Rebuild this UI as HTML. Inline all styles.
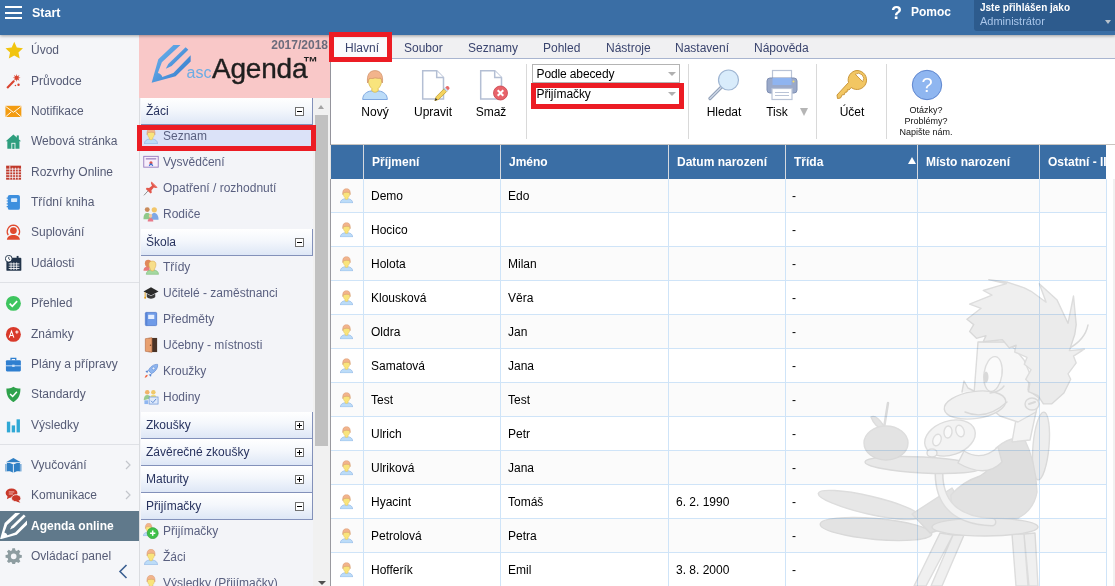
<!DOCTYPE html><html lang="cs"><head><meta charset="utf-8"><title>Agenda online</title><style>
*{box-sizing:border-box;margin:0;padding:0}
html,body{width:1115px;height:586px;overflow:hidden;background:#fff}
body{font-family:"Liberation Sans",Arial,sans-serif;font-size:12px;color:#000;position:relative}
.abs{position:absolute}
#hdr{left:0;top:0;width:1115px;height:35px;background:#3a6ea5;box-shadow:0 1px 3px rgba(0,0,0,.35);z-index:5}
#hdr .start{left:32px;top:5px;font-weight:bold;font-size:12.5px;color:#fff;line-height:16px}
#hdr .bar{left:5px;width:17px;height:2px;background:#fff}
#user{left:974px;top:0;width:141px;height:31px;background:#2d5b8d;border-radius:0 0 0 3px}
#user .l1{left:6px;top:.700px;font-weight:bold;font-size:10px;color:#fff;line-height:13px;white-space:nowrap}
#user .l2{left:6px;top:14px;font-size:11px;color:#a9c6ea;line-height:14px}
#nav{left:0;top:34px;width:139px;height:552px;background:#f5f6f9}
.ni{left:0;width:139px;height:30px;color:#555b75;font-size:12px;line-height:30px;white-space:nowrap}
.ni span{position:absolute;left:31px;top:0}
.ni svg{position:absolute;left:4.800px;top:6.500px;width:16.800px;height:16.800px}
.ni.sel{background:#60798b;color:#fff;font-weight:bold}
.nsep{left:0;width:139px;height:1px;background:#dfe1e6}
#side{left:139px;top:34px;width:192px;height:552px;background:#f3f4f8;border-left:1px solid #dadce0}
#pink{left:139px;top:34px;width:191px;height:64px;background:#f9c8c8}
.sh{left:141px;width:172px;height:27px;background:linear-gradient(#ffffff 0%,#f4f7fc 45%,#dee7f6 100%);border-right:1px solid #8391ba;border-bottom:1px solid #8391ba;color:#27325e;font-size:12px;line-height:27px;padding-left:5px;white-space:nowrap}
.sh i{position:absolute;right:8px;top:9px;width:9px;height:9px;border:1px solid #707070;background:#fff}
.sh i:before{content:"";position:absolute;left:1px;top:3px;width:5px;height:1px;background:#000}
.sh i.p:after{content:"";position:absolute;left:3px;top:1px;width:1px;height:5px;background:#000}
.si{left:141px;width:172px;height:26px;color:#5a6080;font-size:12px;line-height:22px;white-space:nowrap}
.si span{position:absolute;left:22px;top:0}
.si svg{position:absolute;left:2px;top:3px;width:16px;height:16px}
.red{border:5px solid #ec1c24;z-index:9}
#tabs{left:331px;top:34px;width:784px;height:25px;background:#f0f0f2;border-bottom:1px solid #a9b5d0}
.tab{top:0;height:24px;line-height:28px;font-size:12px;color:#3a446e;white-space:nowrap}
#rib{left:331px;top:59px;width:784px;height:86px;background:#fff;border-bottom:1px solid #c9c5c0}
.rl{font-size:12px;line-height:14px;color:#000;text-align:center;white-space:nowrap;transform:translateX(-50%)}
.vsep{top:64px;width:1px;height:75px;background:#d9d9d9}
.sel{ }
.cb{left:532px;width:148px;height:19px;border:1px solid #b4b4b4;background:#fff;font-size:12px;line-height:19px;padding-left:3.500px;white-space:nowrap;letter-spacing:-.12px}
.cb:after{content:"";position:absolute;right:3px;top:7px;border:4px solid transparent;border-top:4px solid #b0b0b0;border-bottom:0}
#th{left:331px;top:145px;width:775px;height:34px;background:#3a6ea5}
.thc{top:0;height:34px;line-height:34px;color:#fff;font-weight:bold;font-size:12px;white-space:nowrap;overflow:hidden}
.csep{top:0;width:1px;height:34px;background:#d5d9df}
.row{left:331px;width:775px;height:34px;border-bottom:1px solid #cfe4f8}
.row.g{background:#fbfbfb}
.td{top:0;height:34px;line-height:35px;font-size:12px;white-space:nowrap}
.vl{top:179px;width:1px;height:407px;background:#cfe4f8}
</style></head><body>

<svg width="0" height="0" style="position:absolute">
<defs>
<symbol id="per" viewBox="0 0 26 30">
<path d="M.7 29.500C.7 24 5 21.500 9 21L17 21C21 21.500 25.300 24 25.300 29.500Z" fill="#bcdcf8" stroke="#7fa8e0" stroke-width="1"/>
<path d="M6.200 9C6.200 14 8 17 9.800 18.500L9.800 20.500C11 22.800 15 22.800 16.200 20.500L16.200 18.500C18 17 19.800 14 19.800 9 19.800 7 6.200 7 6.200 9Z" fill="#f9e47c" stroke="#d9b84a" stroke-width=".8"/>
<path d="M5.600 13C4.500 5 7.500.6 13 .6 18.500.6 21.500 5 20.400 13 20 11 19.600 9.500 18.600 8 16 9 14 7.500 12.500 8 10 9 8.500 8.200 7.600 8.400 6.500 9.500 6.200 11 5.600 13Z" fill="#f2b48c" stroke="#cf9068" stroke-width=".7"/>
</symbol>
</defs></svg>

<div id="hdr" class="abs"><div class="abs bar" style="top:6px"></div><div class="abs bar" style="top:12px"></div><div class="abs bar" style="top:17px"></div><div class="abs start">Start</div>
<div class="abs" style="left:891px;top:2px;font-size:18px;font-weight:bold;color:#fff;line-height:22px">?</div><div class="abs" style="left:911px;top:4px;font-size:12px;font-weight:bold;color:#fff;line-height:16px">Pomoc</div>
<div id="user" class="abs"><div class="abs l1">Jste přihlášen jako</div><div class="abs l2">Administrátor</div><div class="abs" style="left:131px;top:20px;border:3.500px solid transparent;border-top:4px solid #b8c2cc;border-bottom:0"></div></div></div>
<div id="nav" class="abs"></div>
<div class="abs ni" style="top:35px"><svg viewBox="0 0 18 18" style="left:4.500px;top:6px;width:18.500px;height:18.500px"><path d="M9 .8l2.500 5.500 6 .7-4.400 4.100 1.200 5.900L9 14l-5.300 3 1.200-5.900L.5 7l6-.7z" fill="#f1c40f"/></svg><span>Úvod</span></div>
<div class="abs ni" style="top:66px"><svg viewBox="0 0 18 18"><path d="M1.500 15.200l7.500-7.600 1.600 1.600L3.100 16.800z" fill="#d9432f"/><path d="M12.500 1l.7 2.400 2.300-1.200-1.200 2.300 2.400.7-2.400.7 1.200 2.300-2.300-1.200-.7 2.400-.7-2.400-2.300 1.200 1.200-2.300L8.300 5.200l2.400-.7-1.200-2.300 2.300 1.200z" fill="#d9432f"/><circle cx="14.500" cy="12.500" r="1.300" fill="#d9432f"/><circle cx="11.200" cy="13.500" r=".8" fill="#d9432f"/></svg><span>Průvodce</span></div>
<div class="abs ni" style="top:96px"><svg viewBox="0 0 18 18"><rect x=".5" y="3" width="17" height="12" fill="#f39c12"/><path d="M.5 3.500l8.500 6.500 8.500-6.500M.5 15l6.200-5.500M17.500 15l-6.200-5.500" stroke="#fff" stroke-width="1" fill="none"/></svg><span>Notifikace</span></div>
<div class="abs ni" style="top:126px"><svg viewBox="0 0 18 18"><path d="M9 1.500L.8 8.800h1.700V17h13V8.800h1.700z" fill="#2e9e7e"/><rect x="12.600" y="2.600" width="2.200" height="4" fill="#2e9e7e"/><rect x="7.300" y="11" width="3.400" height="6.500" fill="#2e9e7e" stroke="#fff" stroke-width=".9"/></svg><span>Webová stránka</span></div>
<div class="abs ni" style="top:157px"><svg viewBox="0 0 18 18"><rect x="1.200" y="1.800" width="16" height="15" fill="#c0392b"/><path d="M1.200 5.500h16M1.200 8.500h16M1.200 11.500h16M1.200 14.300h16M5.200 1.800v15M8.200 4v12.800M11.200 4v12.800M14.200 4v12.800" stroke="#f5f6f9" stroke-width=".9"/></svg><span>Rozvrhy Online</span></div>
<div class="abs ni" style="top:187px"><svg viewBox="0 0 18 18"><rect x="3" y="1" width="13" height="16" rx="2" fill="#3d8fde"/><rect x="6.500" y="4.500" width="6.500" height="4" rx=".5" fill="#d7e9fb"/><path d="M1.800 4.500h2.400M1.800 7.500h2.400M1.800 10.500h2.400M1.800 13.500h2.400" stroke="#3d8fde" stroke-width="1.300"/></svg><span>Třídní kniha</span></div>
<div class="abs ni" style="top:217px"><svg viewBox="0 0 18 18"><path d="M3.500 12A7 7 0 0 1 9 1.200 7 7 0 0 1 14.500 12" stroke="#e04a2f" stroke-width="1.300" fill="none"/><circle cx="9" cy="7" r="3.600" fill="#e04a2f"/><path d="M2 17c.3-3.500 3-5.200 7-5.200s6.700 1.700 7 5.200z" fill="#e04a2f"/></svg><span>Suplování</span></div>
<div class="abs ni" style="top:248px"><svg viewBox="0 0 18 18"><rect x="1.500" y="3" width="16" height="14" rx="1" fill="#22344a"/><rect x="5" y="1" width="2" height="3.500" fill="#22344a"/><rect x="12.500" y="1" width="2" height="3.500" fill="#22344a"/><path d="M4 9.500h11.500M4 12h11.500M4 14.500h11.500M6.500 8v8M9.500 8v8M12.500 8v8" stroke="#fff" stroke-width=".9"/><circle cx="4" cy="4" r="3.600" fill="#fff" stroke="#22344a" stroke-width="1"/><path d="M4 2v2.200l1.500.9" stroke="#22344a" stroke-width=".9" fill="none"/></svg><span>Události</span></div>
<div class="abs ni" style="top:288px"><svg viewBox="0 0 18 18"><circle cx="9" cy="9" r="8" fill="#3ec55f"/><path d="M5 9.300l2.800 2.800L13 6.500" stroke="#fff" stroke-width="1.800" fill="none"/></svg><span>Přehled</span></div>
<div class="abs ni" style="top:319px"><svg viewBox="0 0 18 18"><circle cx="9" cy="9" r="8" fill="#d93a2b"/><path d="M4.500 12.500l2.500-7 2.500 7M5.400 10.300h3.200M11 6.500h3.500M12.750 4.800v3.500" stroke="#fff" stroke-width="1.100" fill="none"/></svg><span>Známky</span></div>
<div class="abs ni" style="top:349px"><svg viewBox="0 0 18 18"><rect x="1" y="4.500" width="16" height="12" rx="1.200" fill="#2f7fd0"/><path d="M6.500 4.500v-2h5v2" stroke="#2f7fd0" stroke-width="1.400" fill="none"/><path d="M1 10.500h16" stroke="#cfe2f7" stroke-width="1"/><rect x="7.700" y="9.300" width="2.600" height="2.400" fill="#cfe2f7"/></svg><span>Plány a přípravy</span></div>
<div class="abs ni" style="top:379px"><svg viewBox="0 0 18 18"><path d="M9 .8c2.500 1.500 5 2 7.500 2 .2 6.500-2 11.500-7.500 14.500C3.500 14.300 1.300 9.300 1.500 2.800c2.500 0 5-.5 7.500-2z" fill="#2fa24c"/><path d="M5.500 8.500l2.700 2.700 4.500-5" stroke="#fff" stroke-width="1.600" fill="none"/></svg><span>Standardy</span></div>
<div class="abs ni" style="top:410px"><svg viewBox="0 0 18 18"><rect x="2" y="5" width="3.600" height="11.500" fill="#2fa8d5"/><rect x="7.200" y="9" width="3.600" height="7.500" fill="#2fa8d5"/><rect x="12.400" y="2.500" width="3.600" height="14" fill="#2fa8d5"/></svg><span>Výsledky</span></div>
<div class="abs ni" style="top:450px"><svg viewBox="0 0 18 18"><path d="M9 1L1 5.500h16z" fill="#2f7fc4"/><path d="M2 6.500c2.500-.5 5 0 7 1.500 2-1.500 4.500-2 7-1.500v9c-2.500-.5-5 0-7 1.500-2-1.500-4.500-2-7-1.500z" fill="#2f7fc4"/><path d="M9 8v9" stroke="#fff" stroke-width=".9"/><path d="M1 7.500v8M17 7.500v8" stroke="#2f7fc4" stroke-width="1"/></svg><span>Vyučování</span></div>
<div class="abs ni" style="top:480px"><svg viewBox="0 0 18 18"><ellipse cx="7" cy="6.500" rx="6.300" ry="5" fill="#c9392b"/><path d="M3 9.500l-1 3.500 4-2z" fill="#c9392b"/><ellipse cx="12" cy="12" rx="5" ry="3.800" fill="#c9392b" stroke="#f5f6f9" stroke-width=".9"/><path d="M14.500 14.500l2 2.500-4.500-1.500z" fill="#c9392b"/><path d="M4 5.300h6M4 7.500h4.500" stroke="#f3c6c0" stroke-width="1"/></svg><span>Komunikace</span></div>
<div class="abs ni sel" style="top:511px;height:30px"><svg viewBox="75 80 440 425" style="left:0;top:1.800px;width:27.300px;height:26.400px"><path d="M320 80H400L190 272 145 395Q185 405 195 440L320 395 515 195V265L345 430 75 505 150 240z" fill="#fff"/><path d="M458 103L488 132 300 316 235 346 262 292z" fill="#fff"/></svg><span>Agenda online</span></div>
<div class="abs ni" style="top:541px"><svg viewBox="0 0 18 18"><path d="M7.600 1h2.800l.4 2.200 1.500.6 1.900-1.300 2 2-1.300 1.900.6 1.500 2.200.4v2.800l-2.200.4-.6 1.500 1.300 1.900-2 2-1.900-1.300-1.500.6-.4 2.200H7.600l-.4-2.200-1.500-.6-1.900 1.300-2-2 1.300-1.900-.6-1.500L.3 11.100V8.300l2.200-.4.600-1.500L1.800 4.500l2-2 1.900 1.300 1.500-.6z" fill="#8e9da1" transform="translate(.3 -.7)"/><circle cx="9.300" cy="9" r="3" fill="#f5f6f9"/></svg><span>Ovládací panel</span></div>
<div class="abs nsep" style="top:282px"></div><div class="abs nsep" style="top:444px"></div>
<svg class="abs" style="left:124px;top:459px" width="8" height="12" viewBox="0 0 8 12"><path d="M2 2l4 4-4 4" stroke="#c3c6cc" stroke-width="1.200" fill="none"/></svg>
<svg class="abs" style="left:124px;top:489px" width="8" height="12" viewBox="0 0 8 12"><path d="M2 2l4 4-4 4" stroke="#c3c6cc" stroke-width="1.200" fill="none"/></svg>
<svg class="abs" style="left:118px;top:564px" width="10" height="15" viewBox="0 0 10 15"><path d="M8.500 1L2 7.500 8.500 14" stroke="#3a5f91" stroke-width="1.600" fill="none"/></svg>
<div id="side" class="abs"></div><div id="pink" class="abs"></div>
<div class="abs" style="left:139px;top:38px;width:189px;text-align:right;font-weight:bold;font-size:12px;color:#6b6b7c;line-height:14px">2017/2018</div>
<svg class="abs" style="left:145px;top:38px" width="80" height="52" viewBox="0 0 902 586"><defs><linearGradient id="pg" x1="0.1" y1="0.1" x2="0.9" y2="0.8"><stop offset="0" stop-color="#6ab2ec"/><stop offset="1" stop-color="#3a80cf"/></linearGradient></defs><path d="M320 80H400L190 272 145 395Q185 405 195 440L320 395 515 195V265L345 430 75 505 150 240z" fill="url(#pg)"/><path d="M458 103L488 132 300 316 235 346 262 292z" fill="url(#pg)"/></svg>
<div class="abs" style="left:186.500px;top:63px;font-size:16px;color:#6aace4;line-height:20px">asc</div>
<div class="abs" style="left:212px;top:51.400px;font-size:28px;color:#1f1f1f;line-height:36px;letter-spacing:-.2px;-webkit-text-stroke:.4px #1f1f1f">Agenda</div>
<div class="abs" style="left:303px;top:54px;font-size:15px;font-weight:bold;color:#1f1f1f;line-height:16px">™</div>
<div class="abs sh" style="top:98px">Žáci<i class="m"></i></div>
<div class="abs si" style="top:125px;background:#dbe2f8"><svg viewBox="0 0 26 30"><use href="#per"/></svg><span>Seznam</span></div>
<div class="abs si" style="top:151px"><svg viewBox="0 0 17 17"><rect x=".8" y="2.500" width="15.400" height="11.500" fill="#f7eefb" stroke="#9a7fc0" stroke-width="1"/><rect x="3" y="4.500" width="11" height="1.300" fill="#9a7fc0"/><circle cx="8.500" cy="9.500" r="1.700" fill="#e0524a"/><path d="M6.500 12.500l2-2 2 2" stroke="#3a6fd0" stroke-width="1.200" fill="none"/></svg><span>Vysvědčení</span></div>
<div class="abs si" style="top:177px"><svg viewBox="0 0 17 17"><path d="M1 16.300l5.500-6" stroke="#8a8a8a" stroke-width="1"/><path d="M9 1.500l6.500 6.500-1.800.6-2.200-.7-2.500 3 .3 2.600-1.300.9L3 9.500l.9-1.300 2.600.3 3-2.500L8.400 3.300z" fill="#e2574c"/><path d="M9.500 2.500l5 5" stroke="#f59a90" stroke-width="1"/></svg><span>Opatření / rozhodnutí</span></div>
<div class="abs si" style="top:203px"><svg viewBox="0 0 17 17"><circle cx="4.500" cy="3.800" r="2.600" fill="#c98a5a"/><path d="M.5 14c0-4.500 1.500-6.500 4-6.500s4 2 4 6.500z" fill="#8fc98a"/><circle cx="12" cy="4" r="2.800" fill="#f2c66a"/><path d="M8 14.500c0-4.500 1.500-7 4-7s4.500 2.500 4.500 7z" fill="#7fa8e6"/><circle cx="8" cy="10.500" r="1.900" fill="#f3c9a0"/><path d="M5 16.500c0-2.500 1.200-3.800 3-3.800s3 1.300 3 3.800z" fill="#e87a8a"/></svg><span>Rodiče</span></div>
<div class="abs sh" style="top:229px">Škola<i class="m"></i></div>
<div class="abs si" style="top:256px"><svg viewBox="0 0 17 17"><path d="M.5 12.500c0-3 1.800-4 3.500-4.300V7h3v5.500z" fill="#e87a7a"/><path d="M2 4.500C2 1.800 3.500.8 5.500.8S9 1.800 9 4.500 7.500 9 5.500 9 2 7.200 2 4.500z" fill="#e0885a"/><path d="M3.500 16.300c0-3 2.300-4.200 4.300-4.500l.9-.8h2.600l.9.800c2 .3 4.300 1.500 4.300 4.500z" fill="#a5d9a0" stroke="#78b873" stroke-width=".6"/><path d="M6.300 6.500C6 3.300 7.800 2.200 10 2.200s4 1.100 3.700 4.300c-.2 2.500-1.400 3.400-1.600 4.600 0 .9-.8 1.600-2.100 1.600s-2.100-.7-2.100-1.600C7.700 9.900 6.500 9 6.300 6.500z" fill="#f7de8a" stroke="#d9a44a" stroke-width=".6"/></svg><span>Třídy</span></div>
<div class="abs si" style="top:282px"><svg viewBox="0 0 17 17"><path d="M8.500 2.500L.5 6.800l8 4.300 8-4.300z" fill="#2a2a2a"/><path d="M4 9.300v3.500c1.200 1.200 2.800 1.700 4.500 1.700s3.300-.5 4.500-1.700V9.300l-4.500 2.400z" fill="#3a3a3a"/><path d="M2.300 7.800v5" stroke="#e0a020" stroke-width="1"/><circle cx="2.300" cy="13.500" r="1.100" fill="#e0a020"/></svg><span>Učitelé - zaměstnanci</span></div>
<div class="abs si" style="top:308px"><svg viewBox="0 0 17 17"><rect x="2.500" y="1.500" width="12" height="14" rx="1" fill="#6f9be8" stroke="#4a74c8" stroke-width=".8"/><rect x="5.500" y="4" width="6.500" height="4.500" fill="#e6efff"/><path d="M4 1.500v14" stroke="#4a74c8" stroke-width=".8"/></svg><span>Předměty</span></div>
<div class="abs si" style="top:334px"><svg viewBox="0 0 17 17"><rect x="6" y="1" width="9" height="15" fill="#4a3326"/><path d="M2.500 1.800L9.500.8v15.400l-7-1z" fill="#e8a070" stroke="#b87048" stroke-width=".7"/><circle cx="8" cy="8.800" r=".8" fill="#7a4a2a"/></svg><span>Učebny - místnosti</span></div>
<div class="abs si" style="top:360px"><svg viewBox="0 0 17 17"><path d="M15.500 1.500c-4-.3-7.500 2-9.800 6.500l3.300 3.300c4.500-2.300 6.800-5.800 6.500-9.800z" fill="#8fb6f0" stroke="#5a86d0" stroke-width=".7"/><circle cx="11.200" cy="5.800" r="1.500" fill="#e8f1ff" stroke="#5a86d0" stroke-width=".6"/><path d="M5.700 8L2.500 8.500 4.500 11zM9 11.300l-.5 3.200L6 12.500z" fill="#5a86d0"/><path d="M4.500 12.500c-1.500.3-2.500 1.500-2.700 3.200 1.700-.2 2.900-1.200 3.200-2.700z" fill="#f06a4a"/></svg><span>Kroužky</span></div>
<div class="abs si" style="top:386px"><svg viewBox="0 0 17 17"><circle cx="4.500" cy="3.500" r="2.400" fill="#f0b46a"/><circle cx="11" cy="3.500" r="2.400" fill="#f0c86a"/><path d="M.8 12c0-4 1.500-5.700 3.700-5.700S8 7.500 8 10" fill="#9acb8f"/><path d="M7.300 11c0-3.500 1.500-4.800 3.700-4.800s3.700 1.500 3.700 5z" fill="#f2dc7a"/><rect x="6.500" y="8.500" width="9.500" height="7.500" fill="#dfeafb" stroke="#6f98d8" stroke-width=".8"/><path d="M8.500 12.500l2 2 3.500-4" stroke="#5a86d0" stroke-width="1" fill="none"/><rect x="1.500" y="12" width="4" height="4" fill="#8fb6f0"/></svg><span>Hodiny</span></div>
<div class="abs sh" style="top:412px">Zkoušky<i class="p"></i></div>
<div class="abs sh" style="top:439px">Závěrečné zkoušky<i class="p"></i></div>
<div class="abs sh" style="top:466px">Maturity<i class="p"></i></div>
<div class="abs sh" style="top:493px">Přijímačky<i class="m"></i></div>
<div class="abs si" style="top:520px"><svg viewBox="0 0 17 17"><use href="#per" x="0" y="0" width="12" height="14"/><circle cx="10.300" cy="10.800" r="5.900" fill="#3fc04a" stroke="#2a9a36" stroke-width=".6"/><path d="M10.300 8v5.600M7.500 10.800h5.600" stroke="#fff" stroke-width="1.600"/></svg><span>Přijímačky</span></div>
<div class="abs si" style="top:546px"><svg viewBox="0 0 26 30"><use href="#per"/></svg><span>Žáci</span></div>
<div class="abs si" style="top:572px"><svg viewBox="0 0 26 30"><use href="#per"/></svg><span>Výsledky (Přijímačky)</span></div>
<div class="abs red" style="left:137px;top:125px;width:179px;height:26px"></div>
<div class="abs" style="left:313px;top:98px;width:17px;height:488px;background:#f1f1f1"></div>
<div class="abs" style="left:315px;top:115px;width:13px;height:331px;background:#c1c1c1"></div>
<div class="abs" style="left:318px;top:105px;border:3.500px solid transparent;border-bottom:4px solid #a3a3a3;border-top:0"></div>
<div class="abs" style="left:317.500px;top:581px;border:4px solid transparent;border-top:4px solid #505050;border-bottom:0"></div>
<div class="abs" style="left:330px;top:59px;width:1px;height:86px;background:#94949c;z-index:3"></div>
<div id="tabs" class="abs">
<div class="abs tab" style="left:14px">Hlavní</div>
<div class="abs tab" style="left:73px">Soubor</div>
<div class="abs tab" style="left:137px">Seznamy</div>
<div class="abs tab" style="left:212px">Pohled</div>
<div class="abs tab" style="left:275px">Nástroje</div>
<div class="abs tab" style="left:344px">Nastavení</div>
<div class="abs tab" style="left:423px">Nápověda</div>
</div>
<div class="abs" style="left:334px;top:37px;width:53px;height:22px;background:#fafbfd"></div><div class="abs tab" style="left:345px;top:34px;z-index:10">Hlavní</div>
<div class="abs red" style="left:329px;top:32px;width:63px;height:30px"></div>
<div id="rib" class="abs"></div><div class="abs" style="left:330px;top:145px;width:1px;height:34px;background:#e2e2e2"></div><div class="abs" style="left:330px;top:179px;width:1px;height:407px;background:#9a9aa0"></div>
<svg class="abs" style="left:362px;top:70px" width="26" height="30" viewBox="0 0 26 30"><use href="#per"/></svg>
<svg class="abs" style="left:421px;top:69px" width="30" height="32" viewBox="0 0 30 32"><path d="M1.700 1.700h14l6.800 6.800v21.600h-20.800z" fill="#fff" stroke="#b4bfd4" stroke-width="1.500"/><path d="M15.700 1.700v6.800h6.800" fill="#fff" stroke="#b4bfd4" stroke-width="1.500"/><g transform="translate(1.500 5.300) scale(.88)"><path d="M14 30l1.500-4.500L24.500 16.500l3 3-9 9z" fill="#f4d35e" stroke="#b8952a" stroke-width=".8"/><path d="M24.500 16.500l1.500-1.500 3 3-1.500 1.500z" fill="#cfe0f4" stroke="#9ab0cc" stroke-width=".5"/><path d="M26 15l1.300-1.300a1.500 1.500 0 0 1 2.100 0l.9.900a1.500 1.500 0 0 1 0 2.100L29 18z" fill="#e86a6a"/><path d="M14 30l1-3 2 2z" fill="#333"/></g></svg>
<svg class="abs" style="left:479px;top:69px" width="30" height="32" viewBox="0 0 30 32"><path d="M1.700 1.700h14l6.800 6.800v21.600h-20.800z" fill="#fff" stroke="#b4bfd4" stroke-width="1.500"/><path d="M15.700 1.700v6.800h6.800" fill="#fff" stroke="#b4bfd4" stroke-width="1.500"/><circle cx="21.500" cy="24" r="7" fill="#e8636a" stroke="#c9444c" stroke-width=".8"/><path d="M18.700 21.200l5.600 5.600M24.300 21.200l-5.600 5.600" stroke="#fff" stroke-width="2"/></svg>
<div class="abs rl" style="left:375px;top:105px">Nový</div>
<div class="abs rl" style="left:433px;top:105px">Upravit</div>
<div class="abs rl" style="left:491px;top:105px">Smaž</div>
<div class="abs rl" style="left:724px;top:105px">Hledat</div>
<div class="abs rl" style="left:852px;top:105px">Účet</div>
<div class="abs rl" style="left:777px;top:105px">Tisk</div>
<div class="abs" style="left:800px;top:108px;border:4px solid transparent;border-top:8px solid #b5b5b5;border-bottom:0"></div>
<div class="abs vsep" style="left:526px"></div>
<div class="abs vsep" style="left:688px"></div>
<div class="abs vsep" style="left:816px"></div>
<div class="abs vsep" style="left:886px"></div>
<div class="abs cb" style="top:64px">Podle abecedy</div><div class="abs cb" style="top:84px;height:23px;line-height:18px">Přijímačky</div>
<div class="abs red" style="left:531px;top:83px;width:153px;height:26px"></div>
<svg class="abs" style="left:708px;top:69px" width="32" height="32" viewBox="0 0 32 32"><path d="M2 29.500L13.500 18" stroke="#8e9db5" stroke-width="3.200" stroke-linecap="round"/><path d="M2 29.500L13.500 18" stroke="#cfd8e6" stroke-width="1.400" stroke-linecap="round"/><circle cx="20.500" cy="11" r="10" fill="#d9ecfb" stroke="#9fb6d3" stroke-width="1.200"/></svg>
<svg class="abs" style="left:766px;top:69px" width="32" height="32" viewBox="0 0 32 32"><rect x="6.500" y="1.500" width="19" height="10" fill="#fff" stroke="#b9c3d6" stroke-width="1.200"/><rect x="1" y="9" width="30" height="15" rx="3" fill="#9aa9c9" stroke="#7f8fb3" stroke-width="1"/><rect x="6.500" y="9" width="19" height="7" fill="#8fb4f0"/><rect x="6" y="19.500" width="20" height="11" fill="#fff" stroke="#b9c3d6" stroke-width="1.200"/><path d="M9 23.500h14M9 26.500h14" stroke="#b9c3d6" stroke-width="1.200"/><circle cx="27.500" cy="12.500" r="1" fill="#f5e06a"/></svg>
<svg class="abs" style="left:836px;top:69px" width="32" height="33" viewBox="0 0 32 33"><path d="M21 1.500a9.500 9.500 0 1 1-5.800 17L13 21l-1.500-.5-.5 2.500-2 .3-.6 2.300-2.200.2L4.500 29l-3 .5-.5-3.500L12.500 13.500A9.500 9.500 0 0 1 21 1.500z" fill="#f2c662" stroke="#c9963a" stroke-width="1"/><path d="M19.300 5.300A5.300 5.300 0 0 1 26.700 12.700Z" fill="#fff" stroke="#c9963a" stroke-width=".9"/></svg>
<svg class="abs" style="left:911px;top:69px" width="32" height="32" viewBox="0 0 32 32"><circle cx="16" cy="16" r="14.700" fill="#8fb6f0" stroke="#5f86cf" stroke-width="1"/><text x="16" y="23" text-anchor="middle" font-family="Liberation Sans,Arial,sans-serif" font-size="20" fill="#fff">?</text></svg>
<div class="abs" style="left:886px;top:105px;width:80px;text-align:center;font-size:9px;line-height:11px;color:#111">Otázky?<br>Problémy?<br>Napište nám.</div>
<div id="th" class="abs">
<div class="abs csep" style="left:32px"></div><div class="abs thc" style="left:41px;width:128px">Příjmení</div>
<div class="abs csep" style="left:169px"></div><div class="abs thc" style="left:178px;width:159px">Jméno</div>
<div class="abs csep" style="left:337px"></div><div class="abs thc" style="left:346px;width:108px">Datum narození</div>
<div class="abs csep" style="left:454px"></div><div class="abs thc" style="left:463px;width:123px">Třída</div>
<div class="abs csep" style="left:586px"></div><div class="abs thc" style="left:595px;width:113px">Místo narození</div>
<div class="abs csep" style="left:708px"></div><div class="abs thc" style="left:717px;width:58px">Ostatní - II</div>
<div class="abs" style="left:577px;top:12px;border:4px solid transparent;border-bottom:7.500px solid #fff;border-top:0"></div>
</div>
<div class="abs row g" style="top:179px"><svg class="abs" style="left:8.800px;top:9.200px" width="13" height="15.600" viewBox="0 0 26 30"><use href="#per"/></svg><div class="abs td" style="left:40px">Demo</div><div class="abs td" style="left:177px">Edo</div><div class="abs td" style="left:345px"></div><div class="abs td" style="left:461px">-</div></div>
<div class="abs row" style="top:213px"><svg class="abs" style="left:8.800px;top:9.200px" width="13" height="15.600" viewBox="0 0 26 30"><use href="#per"/></svg><div class="abs td" style="left:40px">Hocico</div><div class="abs td" style="left:177px"></div><div class="abs td" style="left:345px"></div><div class="abs td" style="left:461px">-</div></div>
<div class="abs row g" style="top:247px"><svg class="abs" style="left:8.800px;top:9.200px" width="13" height="15.600" viewBox="0 0 26 30"><use href="#per"/></svg><div class="abs td" style="left:40px">Holota</div><div class="abs td" style="left:177px">Milan</div><div class="abs td" style="left:345px"></div><div class="abs td" style="left:461px">-</div></div>
<div class="abs row" style="top:281px"><svg class="abs" style="left:8.800px;top:9.200px" width="13" height="15.600" viewBox="0 0 26 30"><use href="#per"/></svg><div class="abs td" style="left:40px">Klousková</div><div class="abs td" style="left:177px">Věra</div><div class="abs td" style="left:345px"></div><div class="abs td" style="left:461px">-</div></div>
<div class="abs row g" style="top:315px"><svg class="abs" style="left:8.800px;top:9.200px" width="13" height="15.600" viewBox="0 0 26 30"><use href="#per"/></svg><div class="abs td" style="left:40px">Oldra</div><div class="abs td" style="left:177px">Jan</div><div class="abs td" style="left:345px"></div><div class="abs td" style="left:461px">-</div></div>
<div class="abs row" style="top:349px"><svg class="abs" style="left:8.800px;top:9.200px" width="13" height="15.600" viewBox="0 0 26 30"><use href="#per"/></svg><div class="abs td" style="left:40px">Samatová</div><div class="abs td" style="left:177px">Jana</div><div class="abs td" style="left:345px"></div><div class="abs td" style="left:461px">-</div></div>
<div class="abs row g" style="top:383px"><svg class="abs" style="left:8.800px;top:9.200px" width="13" height="15.600" viewBox="0 0 26 30"><use href="#per"/></svg><div class="abs td" style="left:40px">Test</div><div class="abs td" style="left:177px">Test</div><div class="abs td" style="left:345px"></div><div class="abs td" style="left:461px">-</div></div>
<div class="abs row" style="top:417px"><svg class="abs" style="left:8.800px;top:9.200px" width="13" height="15.600" viewBox="0 0 26 30"><use href="#per"/></svg><div class="abs td" style="left:40px">Ulrich</div><div class="abs td" style="left:177px">Petr</div><div class="abs td" style="left:345px"></div><div class="abs td" style="left:461px">-</div></div>
<div class="abs row g" style="top:451px"><svg class="abs" style="left:8.800px;top:9.200px" width="13" height="15.600" viewBox="0 0 26 30"><use href="#per"/></svg><div class="abs td" style="left:40px">Ulriková</div><div class="abs td" style="left:177px">Jana</div><div class="abs td" style="left:345px"></div><div class="abs td" style="left:461px">-</div></div>
<div class="abs row" style="top:485px"><svg class="abs" style="left:8.800px;top:9.200px" width="13" height="15.600" viewBox="0 0 26 30"><use href="#per"/></svg><div class="abs td" style="left:40px">Hyacint</div><div class="abs td" style="left:177px">Tomáš</div><div class="abs td" style="left:345px">6. 2. 1990</div><div class="abs td" style="left:461px">-</div></div>
<div class="abs row g" style="top:519px"><svg class="abs" style="left:8.800px;top:9.200px" width="13" height="15.600" viewBox="0 0 26 30"><use href="#per"/></svg><div class="abs td" style="left:40px">Petrolová</div><div class="abs td" style="left:177px">Petra</div><div class="abs td" style="left:345px"></div><div class="abs td" style="left:461px">-</div></div>
<div class="abs row" style="top:553px"><svg class="abs" style="left:8.800px;top:9.200px" width="13" height="15.600" viewBox="0 0 26 30"><use href="#per"/></svg><div class="abs td" style="left:40px">Hofferík</div><div class="abs td" style="left:177px">Emil</div><div class="abs td" style="left:345px">3. 8. 2000</div><div class="abs td" style="left:461px">-</div></div>
<div class="abs vl" style="left:363px"></div>
<div class="abs vl" style="left:500px"></div>
<div class="abs vl" style="left:668px"></div>
<div class="abs vl" style="left:785px"></div>
<div class="abs vl" style="left:917px"></div>
<div class="abs vl" style="left:1039px"></div>
<div class="abs vl" style="left:1106px"></div>
<div class="abs" style="left:1113px;top:179px;width:2px;height:407px;background:#f1f1f1"></div>
<svg class="abs" style="left:810px;top:270px;mix-blend-mode:multiply;z-index:2" width="305" height="316" viewBox="810 270 305 316" fill="#ececec" stroke="#dddddd" stroke-width="1.400" stroke-linejoin="round" stroke-linecap="round">
<!-- chair back -->
<ellipse cx="1041" cy="446" rx="8" ry="34" transform="rotate(5 1041 446)" fill="#eeeeee"/>
<!-- legs of boy -->
<ellipse cx="869" cy="505" rx="52" ry="9" transform="rotate(13 869 505)" fill="#e7e7e7"/>
<ellipse cx="876" cy="529" rx="56" ry="10.500" transform="rotate(5 876 529)" fill="#e7e7e7"/>
<path d="M952 488L972 520 930 533 912 514z" fill="#e3e3e3"/>
<!-- chair legs -->
<path d="M940 533L953 535 926 586H914zM953 535L964 535 942 586H931z" fill="#f0f0f0"/>
<path d="M1012 534L1024 534 1028 586H1016zM1024 534L1035 533 1038 586H1029z" fill="#f0f0f0"/>
<!-- torso -->
<path d="M996 448Q1010 436 1024 438 1036 462 1037 492 1034 510 1018 518L967 521Q950 512 951 495 962 482 980 476 990 470 993 463z" fill="#e2e2e2"/>
<!-- seat -->
<ellipse cx="985" cy="527" rx="53" ry="9" fill="#ededed"/>
<!-- desk support -->
<path d="M939 471Q938 520 992 522" fill="none" stroke="#dddddd" stroke-width="9"/>
<path d="M939 471Q938 520 992 522" fill="none" stroke="#f2f2f2" stroke-width="6"/>
<!-- table top -->
<ellipse cx="923" cy="465" rx="58" ry="8" transform="rotate(3 923 465)" fill="#ececec"/>
<!-- apple -->
<path d="M888 403L884 428" fill="none" stroke-width="2.500"/>
<path d="M884 426Q876 414 871 417 875 428 884 429z" fill="#e4e4e4"/>
<ellipse cx="886" cy="443" rx="22" ry="17" fill="#e3e3e3"/>
<!-- neck & arm -->
<path d="M1018 408L1036 412 1030 440 1012 442z" fill="#f4f4f4"/>
<path d="M998 447Q982 462 964 451L958 463Q986 479 1002 462z" fill="#f3f3f3"/>
<!-- hand -->
<ellipse cx="950" cy="438" rx="26" ry="17" transform="rotate(-18 950 438)" fill="#f3f3f3"/>
<ellipse cx="937" cy="440" rx="4" ry="6" transform="rotate(20 937 440)" fill="#f9f9f9"/>
<ellipse cx="948" cy="432" rx="4" ry="6" transform="rotate(5 948 432)" fill="#f9f9f9"/>
<ellipse cx="960" cy="431" rx="4" ry="6" transform="rotate(-20 960 431)" fill="#f9f9f9"/>
<ellipse cx="932" cy="453" rx="5" ry="4" fill="#f9f9f9"/>
<!-- face -->
<path d="M978 342L1005 342 1015 349 1024 360 1030 374 1028 390 1039 398 1036 412 1018 422 1000 416 974 394z" fill="#f7f7f7"/>
<ellipse cx="975" cy="405" rx="31" ry="13.500" transform="rotate(-8 975 405)" fill="#f5f5f5"/>
<path d="M962 392L964 381 968 388 974 391" fill="#f5f5f5"/>
<path d="M965 412Q986 421 1007 402" fill="none"/>
<ellipse cx="993" cy="374" rx="9" ry="17.500" transform="rotate(8 993 374)" fill="#fbfbfb"/>
<ellipse cx="986" cy="377" rx="2.500" ry="5.500" fill="#d9d9d9" stroke="none"/>
<path d="M990 393Q1000 392 1004 386" fill="none"/>
<ellipse cx="1032" cy="404" rx="7" ry="6" fill="#f5f5f5"/>
<path d="M1029 404L1035 402" fill="none" stroke-width="2"/>
<!-- hair -->
<path d="M1068 349Q1085 340 1088 325" fill="none"/>
<path d="M988.8 279.6 1006.5 283.7 997.0 286.4 983.3 290.5 992.0 295.1 969.6 304.2 981.1 308.3 966.9 319.2 973.7 324.6 969.6 331.5 976.5 338.3 986.0 335.6 983.3 341.6 1002.4 339.7 1009.3 347.9 1016.1 345.1 1014.7 352.0 1027.0 357.4 1024.3 364.3 1031.1 369.7 1025.7 379.3 1029.8 383.4 1028.4 391.6 1038.0 395.7 1043.4 403.9 1051.6 403.9 1063.9 393.0 1070.7 379.3 1068.0 373.8 1076.2 362.9 1073.5 356.1 1084.4 349.2 1069.4 350.6 1074.8 334.2 1076.2 324.6 1073.5 296.0 1068.0 323.3 1057.1 300.1 1039.3 283.7 1046.1 302.2 1031.1 291.3 1024.3 287.8 1007.9 282.3z" fill="#efefef"/>
</svg>

</body></html>
